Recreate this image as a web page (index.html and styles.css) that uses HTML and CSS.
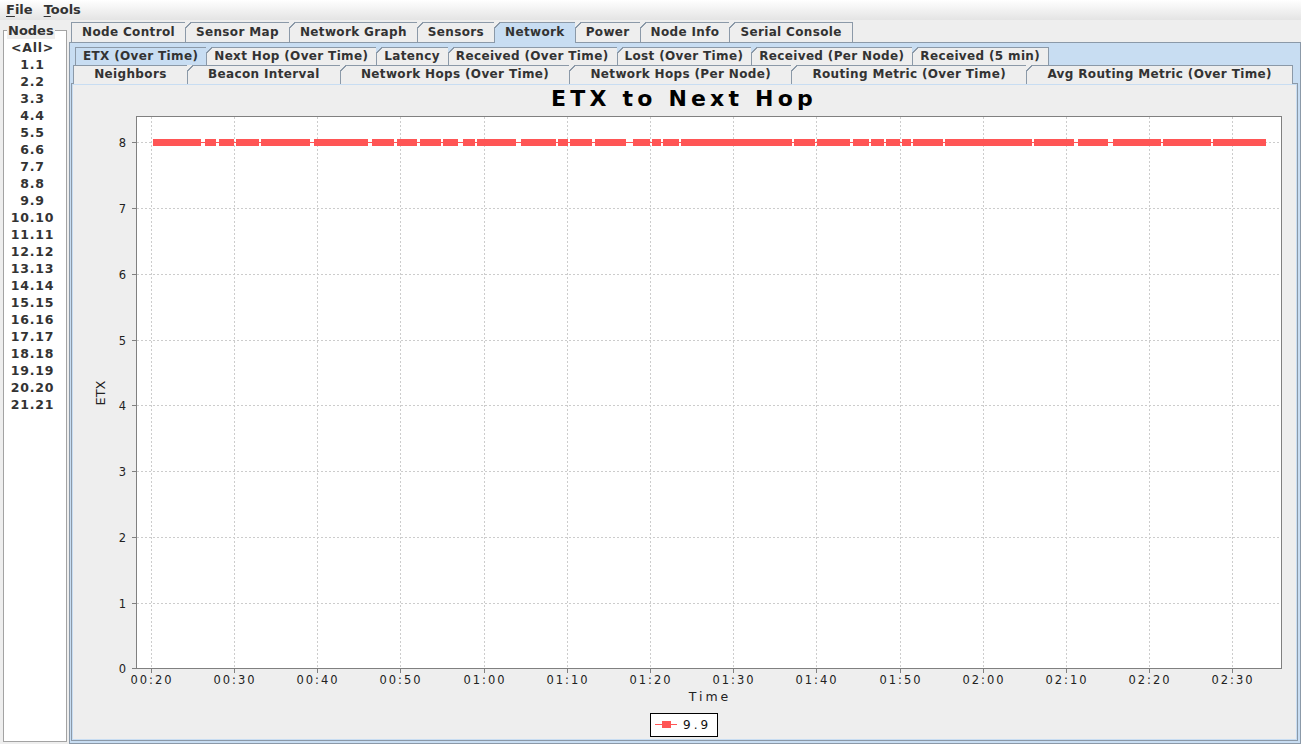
FILE: index.html
```html
<!DOCTYPE html>
<html>
<head>
<meta charset="utf-8">
<link rel="stylesheet" href="styles.css">
</head>
<body>
<div class="menubar">
  <span class="menu"><u>F</u>ile</span>
  <span class="menu"><u>T</u>ools</span>
</div>
<div class="main">
  <fieldset class="nodes">
    <legend>Nodes</legend>
    <ul class="node-list">
      <li>&lt;All&gt;</li><li>1.1</li><li>2.2</li><li>3.3</li><li>4.4</li><li>5.5</li><li>6.6</li><li>7.7</li><li>8.8</li><li>9.9</li><li>10.10</li><li>11.11</li><li>12.12</li><li>13.13</li><li>14.14</li><li>15.15</li><li>16.16</li><li>17.17</li><li>18.18</li><li>19.19</li><li>20.20</li><li>21.21</li>
    </ul>
  </fieldset>
  <div class="tabpane">
    <div class="tabs top-tabs">
      <div class="tab">Node Control</div>
      <div class="tab">Sensor Map</div>
      <div class="tab">Network Graph</div>
      <div class="tab">Sensors</div>
      <div class="tab selected">Network</div>
      <div class="tab">Power</div>
      <div class="tab">Node Info</div>
      <div class="tab">Serial Console</div>
    </div>
    <div class="outer-content">
      <div class="inner-pane">
        <div class="tabs row-back">
          <div class="tab selected">ETX (Over Time)</div>
          <div class="tab">Next Hop (Over Time)</div>
          <div class="tab">Latency</div>
          <div class="tab">Received (Over Time)</div>
          <div class="tab">Lost (Over Time)</div>
          <div class="tab">Received (Per Node)</div>
          <div class="tab">Received (5 min)</div>
        </div>
        <div class="tabs row-front">
          <div class="tab">Neighbors</div>
          <div class="tab">Beacon Interval</div>
          <div class="tab">Network Hops (Over Time)</div>
          <div class="tab">Network Hops (Per Node)</div>
          <div class="tab">Routing Metric (Over Time)</div>
          <div class="tab">Avg Routing Metric (Over Time)</div>
        </div>
        <div class="inner-content">
          <div class="chart">
            <svg class="chart-svg" width="1223" height="654" viewBox="73 85 1223 654">
              <text class="title" x="684" y="106" text-anchor="middle">ETX to Next Hop</text>
              <rect x="136.5" y="116.5" width="1145" height="552" fill="#fff" stroke="none"/>
              <g class="grid">
                <line x1="151.5" y1="117" x2="151.5" y2="668"/>
                <line x1="234.5" y1="117" x2="234.5" y2="668"/>
                <line x1="317.5" y1="117" x2="317.5" y2="668"/>
                <line x1="400.5" y1="117" x2="400.5" y2="668"/>
                <line x1="484.5" y1="117" x2="484.5" y2="668"/>
                <line x1="567.5" y1="117" x2="567.5" y2="668"/>
                <line x1="650.5" y1="117" x2="650.5" y2="668"/>
                <line x1="733.5" y1="117" x2="733.5" y2="668"/>
                <line x1="816.5" y1="117" x2="816.5" y2="668"/>
                <line x1="900.5" y1="117" x2="900.5" y2="668"/>
                <line x1="983.5" y1="117" x2="983.5" y2="668"/>
                <line x1="1066.5" y1="117" x2="1066.5" y2="668"/>
                <line x1="1149.5" y1="117" x2="1149.5" y2="668"/>
                <line x1="1232.5" y1="117" x2="1232.5" y2="668"/>
                <line x1="137" y1="142.5" x2="1281" y2="142.5"/>
                <line x1="137" y1="208.5" x2="1281" y2="208.5"/>
                <line x1="137" y1="274.5" x2="1281" y2="274.5"/>
                <line x1="137" y1="340.5" x2="1281" y2="340.5"/>
                <line x1="137" y1="405.5" x2="1281" y2="405.5"/>
                <line x1="137" y1="471.5" x2="1281" y2="471.5"/>
                <line x1="137" y1="537.5" x2="1281" y2="537.5"/>
                <line x1="137" y1="603.5" x2="1281" y2="603.5"/>
              </g>
              <g class="ticks">
                <line x1="132" y1="142.5" x2="136" y2="142.5"/>
                <line x1="132" y1="208.5" x2="136" y2="208.5"/>
                <line x1="132" y1="274.5" x2="136" y2="274.5"/>
                <line x1="132" y1="340.5" x2="136" y2="340.5"/>
                <line x1="132" y1="405.5" x2="136" y2="405.5"/>
                <line x1="132" y1="471.5" x2="136" y2="471.5"/>
                <line x1="132" y1="537.5" x2="136" y2="537.5"/>
                <line x1="132" y1="603.5" x2="136" y2="603.5"/>
                <line x1="132" y1="668.5" x2="136" y2="668.5"/>
                <line x1="151.5" y1="669" x2="151.5" y2="673"/>
                <line x1="234.5" y1="669" x2="234.5" y2="673"/>
                <line x1="317.5" y1="669" x2="317.5" y2="673"/>
                <line x1="400.5" y1="669" x2="400.5" y2="673"/>
                <line x1="484.5" y1="669" x2="484.5" y2="673"/>
                <line x1="567.5" y1="669" x2="567.5" y2="673"/>
                <line x1="650.5" y1="669" x2="650.5" y2="673"/>
                <line x1="733.5" y1="669" x2="733.5" y2="673"/>
                <line x1="816.5" y1="669" x2="816.5" y2="673"/>
                <line x1="900.5" y1="669" x2="900.5" y2="673"/>
                <line x1="983.5" y1="669" x2="983.5" y2="673"/>
                <line x1="1066.5" y1="669" x2="1066.5" y2="673"/>
                <line x1="1149.5" y1="669" x2="1149.5" y2="673"/>
                <line x1="1232.5" y1="669" x2="1232.5" y2="673"/>
              </g>
              <rect class="plot-outline" x="136.5" y="116.5" width="1145" height="552"/>
              <g class="ylabels" text-anchor="end">
                <text x="128" y="147">8</text>
                <text x="128" y="213">7</text>
                <text x="128" y="279">6</text>
                <text x="128" y="345">5</text>
                <text x="128" y="410">4</text>
                <text x="128" y="476">3</text>
                <text x="128" y="542">2</text>
                <text x="128" y="608">1</text>
                <text x="128" y="673">0</text>
              </g>
              <g class="xlabels" text-anchor="middle">
                <text x="152" y="684">00:20</text>
                <text x="235" y="684">00:30</text>
                <text x="318" y="684">00:40</text>
                <text x="401" y="684">00:50</text>
                <text x="485" y="684">01:00</text>
                <text x="568" y="684">01:10</text>
                <text x="651" y="684">01:20</text>
                <text x="734" y="684">01:30</text>
                <text x="817" y="684">01:40</text>
                <text x="901" y="684">01:50</text>
                <text x="984" y="684">02:00</text>
                <text x="1067" y="684">02:10</text>
                <text x="1150" y="684">02:20</text>
                <text x="1233" y="684">02:30</text>
              </g>
              <text class="axis-label" x="710" y="701" text-anchor="middle">Time</text>
              <text class="axis-label-y" x="0" y="0" text-anchor="middle" transform="translate(104.5 393) rotate(-90)">ETX</text>
              <line class="series-line" x1="153" y1="142.5" x2="1266" y2="142.5"/>
              <g class="series">
                <rect x="153" y="139" width="48" height="7"/>
                <rect x="205" y="139" width="11" height="7"/>
                <rect x="219" y="139" width="15" height="7"/>
                <rect x="236" y="139" width="23" height="7"/>
                <rect x="261" y="139" width="49" height="7"/>
                <rect x="314" y="139" width="54" height="7"/>
                <rect x="372" y="139" width="22" height="7"/>
                <rect x="397" y="139" width="20" height="7"/>
                <rect x="420" y="139" width="21" height="7"/>
                <rect x="443" y="139" width="15" height="7"/>
                <rect x="463" y="139" width="12" height="7"/>
                <rect x="477" y="139" width="39" height="7"/>
                <rect x="521" y="139" width="35" height="7"/>
                <rect x="558" y="139" width="10" height="7"/>
                <rect x="570" y="139" width="22" height="7"/>
                <rect x="595" y="139" width="31" height="7"/>
                <rect x="633" y="139" width="17" height="7"/>
                <rect x="652" y="139" width="9" height="7"/>
                <rect x="663" y="139" width="16" height="7"/>
                <rect x="681" y="139" width="111" height="7"/>
                <rect x="794" y="139" width="21" height="7"/>
                <rect x="817" y="139" width="33" height="7"/>
                <rect x="853" y="139" width="16" height="7"/>
                <rect x="871" y="139" width="13" height="7"/>
                <rect x="886" y="139" width="14" height="7"/>
                <rect x="902" y="139" width="9" height="7"/>
                <rect x="913" y="139" width="30" height="7"/>
                <rect x="945" y="139" width="87" height="7"/>
                <rect x="1034" y="139" width="40" height="7"/>
                <rect x="1078" y="139" width="30" height="7"/>
                <rect x="1113" y="139" width="48" height="7"/>
                <rect x="1163" y="139" width="48" height="7"/>
                <rect x="1213" y="139" width="53" height="7"/>
              </g>
              <g class="legend">
                <rect class="legend-box" x="650.5" y="713.5" width="67" height="23"/>
                <line class="series-line" x1="655" y1="724.5" x2="677" y2="724.5"/>
                <rect class="legend-swatch" x="662" y="721" width="9" height="7"/>
                <text class="legend-text" x="683" y="729">9.9</text>
              </g>
            </svg>
          </div>
        </div>
      </div>
    </div>
  </div>
</div>
</body>
</html>
```
FILE: styles.css
```css
* { box-sizing: border-box; }
html, body {
  margin: 0;
  padding: 0;
}
body {
  width: 1301px;
  height: 744px;
  overflow: hidden;
  background: #eeeeee;
  font-family: "DejaVu Sans", sans-serif;
  color: #333333;
}
.menubar {
  height: 20px;
  display: flex;
  align-items: center;
  gap: 11px;
  padding-left: 6px;
  padding-bottom: 1px;
  background: linear-gradient(#ffffff, #e4e4e4);
  font-size: 13px;
  font-weight: bold;
  color: #333;
}
.menu u { text-decoration: underline; text-underline-offset: 2px; }

.main {
  display: flex;
  height: 724px;
}

/* Nodes list */
.nodes {
  width: 64px;
  margin: 2px 2px 2px 3px;
  padding: 0;
  border: 1px solid #a3a3a3;
  background: #ffffff;
  min-width: 0;
}
.nodes legend {
  margin-left: 3px;
  padding: 0 1px;
  font-size: 13px;
  font-weight: bold;
  line-height: 17px;
  color: #333;
  background: #eeeeee;
}
.node-list {
  list-style: none;
  margin: 0;
  padding: 0 5px 0 0;
  font-size: 12.5px;
  font-weight: bold;
  letter-spacing: 0.8px;
  text-align: center;
  color: #333;
}
.node-list li {
  height: 17px;
  line-height: 17px;
}

/* Tabbed pane */
.tabpane {
  flex: 1;
  display: flex;
  flex-direction: column;
  padding-top: 2px;
  min-width: 0;
}
.tabs {
  display: flex;
  position: relative;
  z-index: 1;
}
.tab {
  position: relative;
  font-size: 12px;
  font-weight: bold;
  color: #333;
  background: #eeeeee;
  border: 1px solid #8b99a8;
  border-bottom: none;
  white-space: nowrap;
  text-align: center;
  letter-spacing: 0.35px;
}
.tab + .tab { margin-left: -1px; }
.tab::before {
  content: "";
  position: absolute;
  left: -1px;
  top: -1px;
  width: 7px;
  height: 7px;
  background: linear-gradient(135deg, var(--behind, #eeeeee) 0 42%, #8b99a8 42% 56%, transparent 56%);
}
.tab:first-child::before { display: none; }
.tab.selected { background: #c8ddf2; }

.top-tabs {
  padding-left: 2px;
  height: 20px;
}
.top-tabs .tab {
  height: 21px;
  line-height: 19px;
  padding: 0 10px;
}
.top-tabs .tab:not(.selected) { height: 20px; }

.outer-content {
  flex: 1;
  display: flex;
  border: 1px solid #8b99a8;
  background: #c8ddf2;
  padding: 4px 2px 2px 1px;
  min-height: 0;
}
.inner-pane {
  flex: 1;
  display: flex;
  flex-direction: column;
  min-width: 0;
}
.row-back {
  padding-left: 4px;
  height: 18px;
  --behind: #c8ddf2;
}
.row-back .tab {
  height: 19px;
  line-height: 17px;
  padding: 0 8px 0 7px;
  --behind: #c8ddf2;
}
.row-front {
  padding-left: 2px;
  padding-right: 5px;
  height: 18px;
}
.row-front .tab {
  flex: 1 1 auto;
  height: 19px;
  line-height: 17px;
  padding: 0 8px;
  --behind: #eeeeee;
}

.inner-content {
  flex: 1;
  display: flex;
  border: 1px solid #8b99a8;
  background: #c8ddf2;
  padding: 1px;
  min-height: 0;
}
.chart {
  flex: 1;
  background: #eeeeee;
  overflow: hidden;
}
.chart-svg { display: block; }

.title {
  font-family: "DejaVu Sans", sans-serif;
  font-weight: bold;
  font-size: 22px;
  letter-spacing: 4.2px;
  fill: #000;
}
.grid line {
  stroke: #cccccc;
  stroke-width: 1;
  stroke-dasharray: 2 2;
}
.ticks line {
  stroke: #808080;
  stroke-width: 1;
}
.plot-outline {
  fill: none;
  stroke: #808080;
  stroke-width: 1;
}
.ylabels text, .xlabels text {
  font-family: "DejaVu Sans", sans-serif;
  font-size: 11.5px;
  letter-spacing: 2px;
  fill: #222;
}
.axis-label {
  font-family: "DejaVu Sans", sans-serif;
  font-size: 12.5px;
  letter-spacing: 3px;
  fill: #222;
}
.axis-label-y {
  font-family: "DejaVu Sans", sans-serif;
  font-size: 13px;
  fill: #222;
}
.series-line {
  stroke: #ff5555;
  stroke-width: 1;
}
.series rect, .legend-swatch {
  fill: #ff5555;
}
.legend-box {
  fill: #ffffff;
  stroke: #000000;
  stroke-width: 1;
}
.legend-text {
  font-family: "DejaVu Sans", sans-serif;
  font-size: 12px;
  letter-spacing: 3px;
  fill: #111;
}
```
